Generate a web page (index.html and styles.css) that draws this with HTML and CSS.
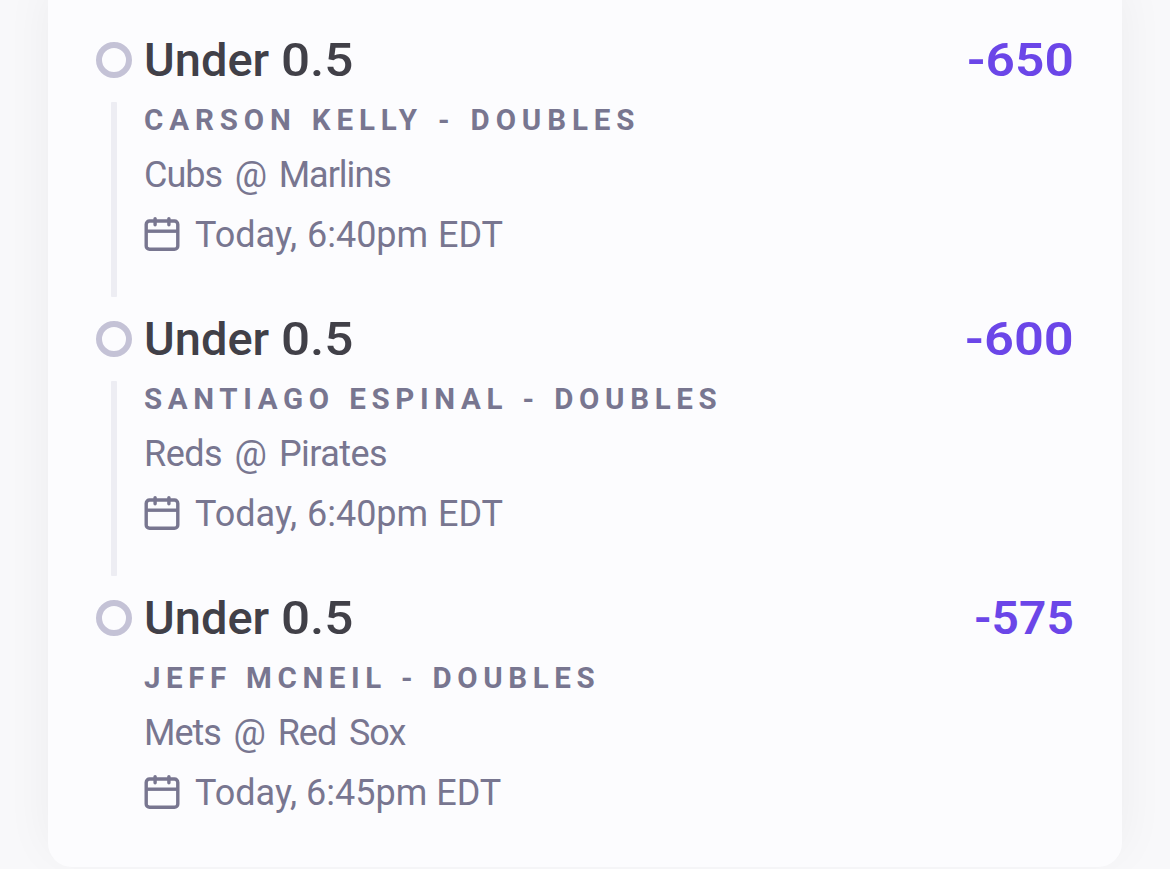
FILE: index.html
```html
<!DOCTYPE html>
<html lang="en">
<head>
<meta charset="utf-8">
<title>Bet legs</title>
<link rel="stylesheet" href="styles.css">
</head>
<body>
<svg class="defs" width="0" height="0" aria-hidden="true">
  <symbol id="calendar" viewBox="0 0 36 36">
    <g fill="none" stroke="currentColor" stroke-width="3.4">
      <rect x="2.2" y="5" width="31.6" height="28.3" rx="3.4"/>
      <path d="M2.2 15.2H33.8"/>
      <path stroke-linecap="round" d="M11.1 2.6V8.8M24.9 2.6V8.8"/>
    </g>
  </symbol>
</svg>
<main class="card">
  <section class="leg">
    <div class="rail"><span class="dot"></span><span class="line"></span></div>
    <div class="body">
      <div class="head"><h2 class="pick">Under <span class="num">0.5</span></h2><span class="odds">-650</span></div>
      <div class="market carson">CARSON KELLY - DOUBLES</div>
      <div class="matchup cubs">Cubs @ Marlins</div>
      <div class="time"><svg class="icon"><use href="#calendar"/></svg><span class="when">Today, 6:40pm EDT</span></div>
    </div>
  </section>
  <section class="leg">
    <div class="rail"><span class="dot"></span><span class="line"></span></div>
    <div class="body">
      <div class="head"><h2 class="pick">Under <span class="num">0.5</span></h2><span class="odds wide">-600</span></div>
      <div class="market santiago">SANTIAGO ESPINAL - DOUBLES</div>
      <div class="matchup reds">Reds @ Pirates</div>
      <div class="time"><svg class="icon"><use href="#calendar"/></svg><span class="when">Today, 6:40pm EDT</span></div>
    </div>
  </section>
  <section class="leg">
    <div class="rail"><span class="dot"></span></div>
    <div class="body">
      <div class="head"><h2 class="pick">Under <span class="num">0.5</span></h2><span class="odds narrow">-575</span></div>
      <div class="market jeff">JEFF MCNEIL - DOUBLES</div>
      <div class="matchup mets">Mets @ Red Sox</div>
      <div class="time"><svg class="icon"><use href="#calendar"/></svg><span class="when late">Today, 6:45pm EDT</span></div>
    </div>
  </section>
</main>
</body>
</html>
```
FILE: styles.css
```css
* { box-sizing: border-box; }
body {
  margin: 0;
  height: 869px;
  overflow: hidden;
  background: #f8f8fa;
  font-family: Roboto, "Liberation Sans", sans-serif;
  color: #787690;
}
.defs { display: block; }
.card {
  width: 1074px;
  height: 867px;
  margin: 0 48px;
  padding: 30px 48px 0;
  background: #fcfcfe;
  border-radius: 0 0 24px 24px;
  box-shadow: 0 -12px 48px rgba(30, 30, 40, 0.05);
}
.leg { display: flex; height: 279px; }
.rail {
  width: 36px;
  margin-right: 12px;
  padding-top: 12px;
  display: flex;
  flex-direction: column;
  align-items: center;
  gap: 24px;
}
.dot {
  width: 36px;
  height: 36px;
  border: 6px solid #c4c2d6;
  border-radius: 50%;
}
.line { width: 6px; height: 195px; background: #ededf3; border-radius: 1px; }
.body { flex: 1; white-space: nowrap; }
.head { display: flex; justify-content: space-between; height: 60px; }
.pick, .odds {
  margin: 0;
  font-size: 47px;
  line-height: 60px;
  font-weight: 600;
}
.pick { color: #414048; font-weight: 500; }
.num { display: inline-block; transform: scaleX(1.09); transform-origin: left; }
.odds { color: #6b46e8; transform: scaleX(1.095); transform-origin: right; }
.odds.wide { transform: scaleX(1.115); }
.odds.narrow { transform: scaleX(1.02); }
.market {
  height: 60px;
  font-size: 29.5px;
  line-height: 60px;
  font-weight: 700;
  letter-spacing: 5.9px;
  word-spacing: 1.8px;
}
.market.santiago { letter-spacing: 5.65px; word-spacing: 1.5px; }
.market.jeff { letter-spacing: 5.6px; word-spacing: 1.3px; }
.matchup {
  height: 54px;
  padding-top: 1px;
  font-size: 36px;
  line-height: 48px;
  letter-spacing: -1px;
  word-spacing: 4.7px;
}
.matchup.reds { letter-spacing: -0.55px; word-spacing: 4.2px; }
.matchup.mets { word-spacing: 4.8px; }
.time {
  display: flex;
  align-items: center;
  gap: 15px;
  height: 60px;
  font-size: 36px;
  line-height: 60px;
}
.when { padding-top: 2px; word-spacing: 0.9px; }
.when.late { word-spacing: 0; }
.icon { width: 36px; height: 36px; }
```
